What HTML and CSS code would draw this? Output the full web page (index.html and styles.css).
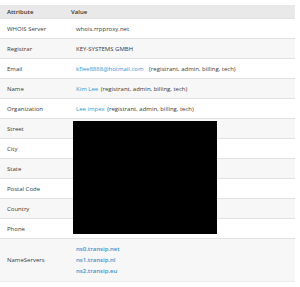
FILE: index.html
```html
<!DOCTYPE html>
<html>
<head>
<meta charset="utf-8">
<link rel="stylesheet" href="styles.css">
</head>
<body>
<div class="wrap">
<table class="whois">
  <thead>
    <tr><th class="attr">Attribute</th><th class="val">Value</th></tr>
  </thead>
  <tbody>
    <tr><td class="attr">WHOIS Server</td><td class="val">whois.rrpproxy.net</td></tr>
    <tr><td class="attr">Registrar</td><td class="val">KEY-SYSTEMS GMBH</td></tr>
    <tr><td class="attr">Email</td><td class="val"><a class="lnk">kflee8888@hotmail.com</a> <span class="roles wide">(registrant, admin, billing, tech)</span></td></tr>
    <tr><td class="attr">Name</td><td class="val"><a class="lnk">Kim Lee</a> <span class="roles">(registrant, admin, billing, tech)</span></td></tr>
    <tr><td class="attr">Organization</td><td class="val"><a class="lnk">Lee impex</a> <span class="roles">(registrant, admin, billing, tech)</span></td></tr>
    <tr><td class="attr">Street</td><td class="val"></td></tr>
    <tr><td class="attr">City</td><td class="val"></td></tr>
    <tr><td class="attr">State</td><td class="val"></td></tr>
    <tr><td class="attr">Postal Code</td><td class="val"></td></tr>
    <tr><td class="attr">Country</td><td class="val"></td></tr>
    <tr><td class="attr">Phone</td><td class="val"></td></tr>
    <tr class="ns"><td class="attr">NameServers</td><td class="val"><a class="lnk nsl">ns0.transip.net</a><a class="lnk nsl">ns1.transip.nl</a><a class="lnk nsl">ns2.transip.eu</a></td></tr>
  </tbody>
</table>
<div class="redact"></div>
</div>
</body>
</html>
```
FILE: styles.css
```css
html, body {
  margin: 0;
  padding: 0;
  background: #fff;
}
body {
  font-family: "Open Sans", "DejaVu Sans", sans-serif;
  font-size: 6px;
  color: #3a3a3a;
}
.wrap {
  position: relative;
  padding-top: 5px;
}
.whois {
  width: 295px;
  border-collapse: collapse;
  table-layout: fixed;
}
.whois th {
  height: 13px;
  background: #e9e9e9;
  font-weight: 600;
  text-align: left;
  color: #333;
  padding: 0;
}
.whois td {
  height: 19px;
  border-top: 1px solid #e2e2e2;
  padding: 0;
  vertical-align: middle;
}
.whois tbody tr:nth-child(even) td {
  background: #f7f7f7;
}
.whois .attr {
  width: 64px;
  padding-left: 7px;
}
.whois td.val {
  padding-left: 5px;
}
.whois tr.ns td {
  height: 42px;
  border-bottom: 1px solid #ececec;
}
.lnk {
  color: #3596d0;
  text-decoration: none;
}
.nsl {
  display: block;
  font-weight: 600;
  line-height: 11px;
}
.roles {
  margin-left: 1px;
}
.roles.wide {
  margin-left: 4px;
}
.redact {
  position: absolute;
  left: 73px;
  top: 121px;
  width: 144px;
  height: 113px;
  background: #000;
}
```
